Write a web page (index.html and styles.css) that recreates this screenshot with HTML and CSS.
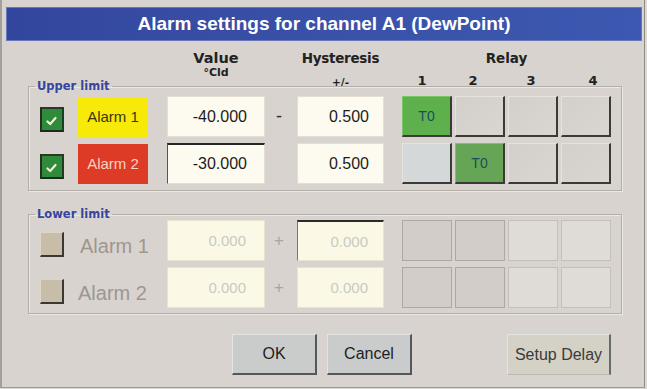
FILE: index.html
```html
<!DOCTYPE html>
<html>
<head>
<meta charset="utf-8">
<link rel="stylesheet" href="styles.css">
</head>
<body>
<div class="window">
  <div class="titlebar">Alarm settings for channel A1 (DewPoint)</div>
  <div class="head">
    <div class="hcol hval"><div class="h big">Value</div><div class="unit">°Cld</div></div>
    <div class="hcol hhys"><div class="h tight">Hysteresis</div><div class="pm">+/-</div></div>
    <div class="hcol hrel"><div class="h">Relay</div>
      <div class="nums"><span>1</span><span>2</span><span>3</span><span>4</span></div>
    </div>
  </div>

  <fieldset class="group upper">
    <legend>Upper limit</legend>
    <div class="rows">
      <div class="row">
        <span class="chk on"><svg width="11" height="10" viewBox="0 0 11 10"><path d="M1.5 5.5 L4.2 8 L9.5 2" fill="none" stroke="#f4f1d8" stroke-width="2.2" stroke-linecap="round" stroke-linejoin="round"/></svg></span>
        <span class="lbl yellow">Alarm 1</span>
        <span class="inp val">-40.000</span>
        <span class="sign">-</span>
        <span class="inp hys">0.500</span>
        <div class="relays">
          <span class="rb green">T0</span><span class="rb"></span><span class="rb"></span><span class="rb"></span>
        </div>
      </div>
      <div class="row">
        <span class="chk on"><svg width="11" height="10" viewBox="0 0 11 10"><path d="M1.5 5.5 L4.2 8 L9.5 2" fill="none" stroke="#f4f1d8" stroke-width="2.2" stroke-linecap="round" stroke-linejoin="round"/></svg></span>
        <span class="lbl red">Alarm 2</span>
        <span class="inp val dark">-30.000</span>
        <span class="sign"></span>
        <span class="inp hys">0.500</span>
        <div class="relays">
          <span class="rb blueish"></span><span class="rb green olive">T0</span><span class="rb"></span><span class="rb"></span>
        </div>
      </div>
    </div>
  </fieldset>

  <fieldset class="group lower">
    <legend>Lower limit</legend>
    <div class="rows">
      <div class="row">
        <span class="chk off"></span>
        <span class="lbl dis">Alarm 1</span>
        <span class="inp val dis">0.000</span>
        <span class="sign dis">+</span>
        <span class="inp hys dis dark">0.000</span>
        <div class="relays">
          <span class="rb flat"></span><span class="rb flat"></span><span class="rb flat light"></span><span class="rb flat light"></span>
        </div>
      </div>
      <div class="row">
        <span class="chk off"></span>
        <span class="lbl dis second">Alarm 2</span>
        <span class="inp val dis">0.000</span>
        <span class="sign dis">+</span>
        <span class="inp hys dis">0.000</span>
        <div class="relays">
          <span class="rb flat"></span><span class="rb flat"></span><span class="rb flat light"></span><span class="rb flat light"></span>
        </div>
      </div>
    </div>
  </fieldset>

  <div class="buttons">
    <button class="btn">OK</button>
    <button class="btn">Cancel</button>
    <button class="btn setup">Setup Delay</button>
  </div>
</div>
</body>
</html>
```

FILE: styles.css
```css
html, body {
  margin: 0;
  padding: 0;
  background: #dcd8d3;
}

.window {
  width: 642px;
  height: 387px;
  border-left: 2px solid #a3a09c;
  border-right: 1px solid #8e8b87;
  border-bottom: 1px solid #9c9995;
  background: #d8d3ce;
  font-family: "Liberation Sans", Arial, sans-serif;
  display: flex;
  flex-direction: column;
}

.titlebar {
  margin: 7px 2px 0 4px;
  height: 34px;
  line-height: 34px;
  background: linear-gradient(90deg, #33469e 0%, #3a51a8 50%, #3c58b0 100%);
  box-shadow: inset 0 0 0 1px #6a78b8;
  color: #ffffff;
  font-weight: bold;
  font-size: 19px;
  text-align: center;
}

/* header */
.head {
  height: 39px;
  box-sizing: border-box;
  padding: 9px 0 0 38px;
  display: grid;
  grid-template-columns: 38px 89px 98px 32px 105px 209px;
  font-family: "DejaVu Sans", sans-serif;
  font-weight: bold;
  color: #222;
}
.hcol {
  display: flex;
  flex-direction: column;
  align-items: center;
}
.hval { grid-column: 3; }
.hhys { grid-column: 5; width: 87px; }
.hrel { grid-column: 6; }
.h {
  font-size: 13.5px;
  line-height: 16px;
}
.h.big { font-size: 14.5px; }
.h.tight { letter-spacing: -0.3px; }
.unit {
  font-size: 11px;
  line-height: 12px;
  margin-top: 1px;
}
.pm {
  font-size: 10.5px;
  line-height: 14px;
  margin-top: 9px;
}
.nums {
  margin-top: 7px;
  display: grid;
  grid-template-columns: repeat(4, 50px);
  column-gap: 3px;
  font-size: 13px;
  line-height: 16px;
  text-align: center;
}
.nums span:nth-child(1) { padding-right: 10px; }
.nums span:nth-child(2) { padding-right: 14px; }
.nums span:nth-child(3) { padding-right: 4px; }
.nums span:nth-child(4) { padding-left: 14px; }

/* groups */
.group {
  margin: 0 22px 0 26px;
  padding: 4px 9px 6px 11px;
  border: 1px solid #b3aea8;
  box-shadow: 1px 1px 0 #ebe8e4, inset 1px 1px 0 #ebe8e4;
  min-width: 0;
}
.group legend {
  font-family: "DejaVu Sans", sans-serif;
  font-weight: bold;
  font-size: 11.5px;
  line-height: 12px;
  color: #3445a0;
  padding: 0 2px;
  margin-left: -5px;
}
.lower {
  margin-top: 17px;
  padding-top: 0;
  padding-bottom: 5px;
}

.rows {
  display: grid;
  grid-auto-rows: 41px;
  row-gap: 6px;
}
.row {
  display: grid;
  grid-template-columns: 38px 89px 98px 32px 105px 209px;
  align-items: center;
}

/* checkboxes */
.chk {
  width: 24px;
  height: 25px;
  box-sizing: border-box;
  margin-top: 6px;
  display: flex;
  align-items: center;
  justify-content: center;
}
.chk.on {
  background: #2f8a3b;
  border: 2px solid #24331f;
  border-color: #2b3a26 #1f3d22 #1d2a1a #23301f;
}
.chk.on svg { margin: 2px 2px 0 0; }
.chk.off {
  background: #c7bda9;
  border-top: 1px solid #ddd5c6;
  border-left: 1px solid #ddd5c6;
  border-right: 2px solid #3a3734;
  border-bottom: 2px solid #3a3734;
  margin-top: 8px;
}

/* labels */
.lbl {
  width: 70px;
  height: 40px;
  display: flex;
  align-items: center;
  justify-content: center;
  font-size: 15px;
}
.lbl.yellow { background: #f7ea08; color: #3a3510; }
.lbl.red { background: #de3b27; color: #f6d2c2; }
.lbl.dis {
  font-size: 20px;
  color: #9d978f;
  justify-content: flex-start;
  padding: 12px 0 0 2px;
  box-sizing: border-box;
  width: 80px;
}
.lbl.dis.second { padding-left: 0; }

/* inputs */
.inp {
  height: 41px;
  box-sizing: border-box;
  background: #fdfbef;
  border: 1px solid #e4dfd2;
  display: flex;
  align-items: center;
  justify-content: flex-end;
  padding-right: 17px;
  font-size: 16px;
  color: #1c1c1c;
}
.inp.val { width: 98px; }
.inp.hys { width: 87px; padding-right: 14px; }
.inp.dark {
  border-top: 2px solid #262626;
  border-left: 1px solid #555;
}
.inp.dis {
  background: #fbf9e6;
  color: #c9c9c3;
  font-size: 15px;
  padding-right: 18px;
  border-color: #e9e4cf;
}
.inp.hys.dis { padding-right: 15px; }
.inp.hys.dis.dark { border-top: 2px solid #2a2a2a; border-left: 1px solid #777; }

.sign {
  text-align: center;
  font-size: 18px;
  color: #2a2a2a;
  padding-right: 4px;
}
.sign.dis { color: #a9a59f; font-size: 17px; }

/* relays */
.relays {
  display: flex;
  gap: 3px;
  height: 41px;
}
.rb {
  width: 50px;
  height: 41px;
  box-sizing: border-box;
  background: linear-gradient(135deg, #d3d0cb, #d9d6d1);
  border-top: 1px solid #e6e3de;
  border-left: 1px solid #e6e3de;
  border-right: 2px solid #3c3a37;
  border-bottom: 2px solid #3c3a37;
  display: flex;
  align-items: center;
  justify-content: center;
  font-size: 14px;
  color: #1b4d5b;
}
.rb.green { background: #5db04b; border-top-color: #7cc46a; border-left-color: #7cc46a; }
.rb.green.olive { background: #67a556; }
.rb.blueish { background: #d5d8d8; }
.rb.flat {
  background: #d2cdc8;
  border: 1px solid #aea8a2;
}
.rb.flat.light {
  background: #dfdbd6;
  border-color: #c4bfb9;
}

/* buttons */
.buttons {
  margin-top: 20px;
  display: flex;
  gap: 10px;
  padding: 0 33px 0 230px;
}
.btn {
  height: 41px;
  width: 85px;
  box-sizing: border-box;
  font-family: "Liberation Sans", Arial, sans-serif;
  font-size: 16px;
  color: #1d1d1d;
  background: #c9cccb;
  border-top: 1px solid #e2e4e3;
  border-left: 1px solid #e2e4e3;
  border-right: 2px solid #55585a;
  border-bottom: 2px solid #55585a;
  padding: 0;
}
.btn.setup {
  margin-left: auto;
  width: 104px;
  background: #d4d1c6;
  color: #3a3a3a;
  border-right: 2px solid #6a6a6a;
  border-bottom: 1px solid #bdb9ae;
}
```
